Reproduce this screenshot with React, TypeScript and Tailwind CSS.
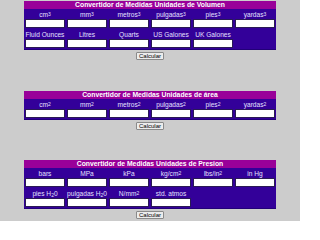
import React from "react";

type Unit = { base: string; sup?: string; sub?: string; tail?: string };

const u = (base: string, sup?: string): Unit => ({ base, sup });

const volumenRows: (Unit | null)[][] = [
  [u("cm", "3"), u("mm", "3"), u("metros", "3"), u("pulgadas", "3"), u("pies", "3"), u("yardas", "3")],
  [u("Fluid Ounces"), u("Litres"), u("Quarts"), u("US Galones"), u("UK Galones"), null],
];

const areaRows: (Unit | null)[][] = [
  [u("cm", "2"), u("mm", "2"), u("metros", "2"), u("pulgadas", "2"), u("pies", "2"), u("yardas", "2")],
];

const presionRows: (Unit | null)[][] = [
  [u("bars"), u("MPa"), u("kPa"), u("kg/cm", "2"), u("lbs/in", "2"), u("in Hg")],
  [
    { base: "pies H", sub: "2", tail: "0" },
    { base: "pulgadas H", sub: "2", tail: "0" },
    u("N/mm", "2"),
    u("std. atmos"),
    null,
    null,
  ],
];

const Label = ({ unit }: { unit: Unit }) => (
  <span>
    {unit.base}
    {unit.sup && <sup className="text-[5px] relative -top-[1px]">{unit.sup}</sup>}
    {unit.sub && <sub className="text-[5px]">{unit.sub}</sub>}
    {unit.tail}
  </span>
);

const Converter = ({ title, rows }: { title: string; rows: (Unit | null)[][] }) => (
  <div className="w-[252px] bg-[#330099] border-b border-[#220077]">
    <div className="h-[8px] bg-[#990099] text-white font-bold text-[6.8px] leading-[8px] text-center">
      {title}
    </div>
    {rows.map((row, r) => (
      <div key={r}>
        <div className="grid grid-cols-6 gap-x-[2px] px-[1px] h-[10px]">
          {row.map((unit, i) => (
            <div
              key={i}
              className="text-center text-[6.6px] leading-[11px] text-[#e4e0ff] whitespace-nowrap"
            >
              {unit && <Label unit={unit} />}
            </div>
          ))}
        </div>
        <div className="grid grid-cols-6 gap-x-[2px] px-[1px] h-[10px]">
          {row.map((unit, i) => (
            <div key={i}>
              {unit && (
                <input
                  type="text"
                  className="block w-full h-[9px] bg-white border border-[#2a1a55] outline-none"
                />
              )}
            </div>
          ))}
        </div>
      </div>
    ))}
  </div>
);

const Button = () => (
  <button className="mt-[2px] h-[8px] px-[2px] bg-[#ececec] border border-[#8a8a8a] rounded-[1px] text-[6px] leading-[6px] text-black">
    Calcular
  </button>
);

export default function App() {
  return (
    <div
      className="w-[300px] h-[221px] bg-[#cccccc] overflow-hidden flex flex-col items-center pt-[1px]"
      style={{ fontFamily: '"Liberation Sans", Arial, sans-serif' }}
    >
      <Converter title="Convertidor de Medidas Unidades de Volumen" rows={volumenRows} />
      <Button />
      <div className="mt-[31px]" />
      <Converter title="Convertidor de Medidas Unidades de área" rows={areaRows} />
      <Button />
      <div className="mt-[30px]" />
      <Converter title="Convertidor de Medidas Unidades de Presion" rows={presionRows} />
      <Button />
    </div>
  );
}
